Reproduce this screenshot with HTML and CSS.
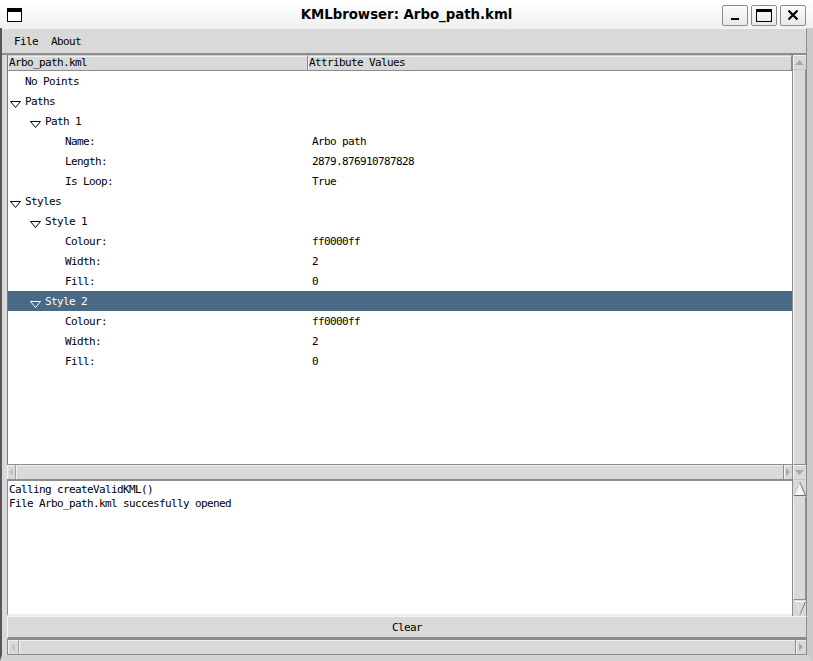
FILE: index.html
```html
<!DOCTYPE html>
<html>
<head>
<meta charset="utf-8">
<link rel="stylesheet" href="styles.css">
</head>
<body>
<div class="window">
  <div class="titlebar">
    <div class="tb-icon">
      <svg width="15" height="14" viewBox="0 0 15 14"><rect x="0.5" y="0.5" width="14" height="13" fill="#fff" stroke="#000"/><rect x="0" y="0" width="15" height="4" fill="#000"/></svg>
    </div>
    <div class="title">KMLbrowser: Arbo_path.kml</div>
    <div class="tb-buttons">
      <div class="tb-btn"><svg width="12" height="12" viewBox="0 0 12 12"><rect x="2" y="9" width="8" height="2" fill="#000"/></svg></div>
      <div class="tb-btn"><svg width="16" height="13" viewBox="0 0 16 13"><rect x="0.5" y="0.5" width="15" height="12" fill="none" stroke="#000"/><rect x="0" y="0" width="16" height="3" fill="#000"/></svg></div>
      <div class="tb-btn"><svg width="12" height="12" viewBox="0 0 12 12"><path d="M1.5 1.5 L10.5 10.5 M10.5 1.5 L1.5 10.5" stroke="#000" stroke-width="2.2"/></svg></div>
    </div>
  </div>
  <div class="frame">
    <div class="menubar"><span>File</span><span>About</span></div>
    <div class="tree-pane">
      <div class="tree-main">
        <div class="tree">
          <div class="tree-head">
            <div class="hcell c1">Arbo_path.kml</div>
            <div class="hcell c2">Attribute Values</div>
          </div>
          <div class="tree-body">
            <div class="row"><div class="name leaf0">No Points</div><div class="val"></div></div>
            <div class="row"><div class="name lvl0"><svg class="tri" width="11" height="7" viewBox="0 0 11 7"><polygon points="0.5,0.5 10.5,0.5 5.5,6.5"/></svg>Paths</div><div class="val"></div></div>
            <div class="row"><div class="name lvl1"><svg class="tri" width="11" height="7" viewBox="0 0 11 7"><polygon points="0.5,0.5 10.5,0.5 5.5,6.5"/></svg>Path 1</div><div class="val"></div></div>
            <div class="row"><div class="name leaf2">Name:</div><div class="val">Arbo path</div></div>
            <div class="row"><div class="name leaf2">Length:</div><div class="val">2879.876910787828</div></div>
            <div class="row"><div class="name leaf2">Is Loop:</div><div class="val">True</div></div>
            <div class="row"><div class="name lvl0"><svg class="tri" width="11" height="7" viewBox="0 0 11 7"><polygon points="0.5,0.5 10.5,0.5 5.5,6.5"/></svg>Styles</div><div class="val"></div></div>
            <div class="row"><div class="name lvl1"><svg class="tri" width="11" height="7" viewBox="0 0 11 7"><polygon points="0.5,0.5 10.5,0.5 5.5,6.5"/></svg>Style 1</div><div class="val"></div></div>
            <div class="row"><div class="name leaf2">Colour:</div><div class="val">ff0000ff</div></div>
            <div class="row"><div class="name leaf2">Width:</div><div class="val">2</div></div>
            <div class="row"><div class="name leaf2">Fill:</div><div class="val">0</div></div>
            <div class="row selected"><div class="name lvl1"><svg class="tri" width="11" height="7" viewBox="0 0 11 7"><polygon points="0.5,0.5 10.5,0.5 5.5,6.5"/></svg>Style 2</div><div class="val"></div></div>
            <div class="row"><div class="name leaf2">Colour:</div><div class="val">ff0000ff</div></div>
            <div class="row"><div class="name leaf2">Width:</div><div class="val">2</div></div>
            <div class="row"><div class="name leaf2">Fill:</div><div class="val">0</div></div>
          </div>
        </div>
        <div class="hscroll ttk">
          <div class="arrow"><svg width="5" height="8" viewBox="0 0 5 8"><polygon points="4,0 0,4 4,8" fill="#c4c4c4"/></svg></div>
          <div class="thumb"></div>
          <div class="arrow"><svg width="5" height="8" viewBox="0 0 5 8"><polygon points="0,0 4,4 0,8" fill="#a8a8a8"/></svg></div>
        </div>
      </div>
      <div class="vscroll ttk">
        <div class="arrow"><svg width="9" height="5" viewBox="0 0 9 5"><polygon points="0,5 4.5,0 9,5" fill="#a8a8a8"/></svg></div>
        <div class="thumb"></div>
        <div class="arrow"><svg width="9" height="5" viewBox="0 0 9 5"><polygon points="0,0 4.5,5 9,0" fill="#a8a8a8"/></svg></div>
      </div>
    </div>
    <div class="log-pane">
      <div class="log">Calling createValidKML()<br>File Arbo_path.kml succesfully opened</div>
      <div class="vscroll tk">
        <div class="tkarrow"><svg width="12" height="14" viewBox="0 0 12 14"><polygon points="6,0.5 11.5,13.5 0.5,13.5" fill="#f4f4f4" stroke="#6e6e6e"/><path d="M6 1.2 L1 13" stroke="#ffffff"/></svg></div>
        <div class="thumb"></div>
        <div class="tkarrow"><svg width="12" height="14" viewBox="0 0 12 14"><polygon points="0.5,0.5 11.5,0.5 6,13.5" fill="#d9d9d9" stroke="#7a7a7a"/><path d="M0.5 0.5 L11.5 0.5 M0.8 0.8 L6 13" stroke="#ffffff"/></svg></div>
      </div>
    </div>
    <div class="clear-btn">Clear</div>
    <div class="hscroll bottom">
      <div class="arrow"><svg width="5" height="8" viewBox="0 0 5 8"><polygon points="4,0 0,4 4,8" fill="#c4c4c4"/></svg></div>
      <div class="thumb"></div>
      <div class="arrow"><svg width="5" height="8" viewBox="0 0 5 8"><polygon points="0,0 4,4 0,8" fill="#a8a8a8"/></svg></div>
    </div>
  </div>
</div>
</body>
</html>
```
FILE: styles.css
```css
html, body {
  margin: 0;
  padding: 0;
}
body {
  width: 813px;
  height: 661px;
  overflow: hidden;
  background: #d9d9d9;
  color: #000;
  font-family: "DejaVu Sans Mono", monospace;
  font-size: 11px;
  letter-spacing: -0.62px;
}
.window {
  display: flex;
  flex-direction: column;
  height: 661px;
}
.titlebar {
  height: 28px;
  flex: none;
  display: grid;
  grid-template-columns: 1fr auto 1fr;
  align-items: center;
  background: linear-gradient(#ffffff, #f0f0f0);
  font-family: "DejaVu Sans", sans-serif;
  letter-spacing: 0;
}
.tb-icon {
  display: flex;
  padding-left: 7px;
  padding-top: 1px;
}
.title {
  font-weight: bold;
  font-size: 13.3px;
  padding-top: 1px;
}
.tb-buttons {
  justify-self: end;
  display: flex;
  gap: 3px;
  padding-right: 7px;
  padding-top: 2px;
}
.tb-btn {
  width: 26px;
  height: 21px;
  box-sizing: border-box;
  border: 1px solid #8c8c8c;
  border-radius: 2px;
  background: linear-gradient(#fbfbfb, #e9e9e9);
  display: flex;
  align-items: center;
  justify-content: center;
}
.frame {
  flex: 1;
  display: flex;
  flex-direction: column;
  border-left: 2px solid #575757;
  border-right: 6px solid #cbcbcb;
  border-bottom: 6px solid #d4d4d4;
  min-height: 0;
}
.menubar {
  height: 27px;
  flex: none;
  box-sizing: border-box;
  border-top: 1px solid #f4f4f4;
  border-bottom: 2px solid #8c8c8c;
  border-right: 1px solid #8c8c8c;
  display: flex;
  align-items: center;
  padding-left: 12px;
  gap: 13px;
}
.tree-pane {
  height: 425px;
  flex: none;
  display: flex;
  padding-left: 5px;
}
.tree-main {
  flex: 1;
  display: flex;
  flex-direction: column;
  min-width: 0;
}
.tree {
  flex: 1;
  display: flex;
  flex-direction: column;
  background: #fff;
  border-left: 1px solid #7a7a7a;
}
.tree-head {
  height: 16px;
  flex: none;
  display: flex;
  background: #d9d9d9;
}
.hcell {
  box-sizing: border-box;
  height: 16px;
  line-height: 14px;
  padding-left: 1px;
  border-top: 1px solid #cfcfcf;
  border-bottom: 1px solid #8c8c8c;
  border-right: 1px solid #8c8c8c;
  box-shadow: inset 1px 1px 0 #efefef;
}
.c1 { width: 300px; }
.c2 { flex: 1; }
.tree-body {
  flex: 1;
}
.row {
  height: 20px;
  display: flex;
  align-items: center;
}
.row .name {
  width: 300px;
  box-sizing: border-box;
  display: flex;
  align-items: center;
}
.row .val {
  padding-left: 4px;
}
.tri {
  margin-top: 6px;
  margin-right: 4px;
  fill: none;
  stroke: currentColor;
}
.lvl0 { padding-left: 2px; }
.lvl1 { padding-left: 22px; }
.leaf0 { padding-left: 17px; }
.leaf2 { padding-left: 57px; }
.selected {
  background: #4a6984;
  color: #fff;
}
.hscroll {
  height: 16px;
  flex: none;
  box-sizing: border-box;
  display: flex;
  align-items: stretch;
  border-top: 1px solid #8c8c8c;
  border-bottom: 1px solid #8c8c8c;
  background: #d9d9d9;
}
.hscroll .arrow {
  width: 8px;
  display: flex;
  align-items: center;
  justify-content: center;
  box-shadow: inset 1px 1px 0 #f2f2f2;
}
.hscroll .thumb {
  flex: 1;
  border-left: 1px solid #a0a0a0;
  border-right: 1px solid #8c8c8c;
  box-shadow: inset 1px 1px 0 #f2f2f2;
}
.hscroll.bottom {
  margin-left: 5px;
  border-right: 1px solid #8c8c8c;
  border-left: 1px solid #8c8c8c;
}
.hscroll.bottom .arrow { width: 10px; }
.vscroll {
  width: 15px;
  flex: none;
  box-sizing: border-box;
  display: flex;
  flex-direction: column;
  background: #d9d9d9;
  border-left: 1px solid #8c8c8c;
  border-right: 1px solid #8c8c8c;
}
.vscroll.ttk .arrow {
  height: 14px;
  flex: none;
  display: flex;
  align-items: center;
  justify-content: center;
  border-bottom: 1px solid #c4c4c4;
  box-shadow: inset 1px 1px 0 #f2f2f2;
}
.vscroll .thumb {
  flex: 1;
  border-left: 1px solid #f4f4f4;
  border-right: 1px solid #8c8c8c;
  border-bottom: 1px solid #8c8c8c;
}
.log-pane {
  height: 136px;
  flex: none;
  display: flex;
  padding-left: 5px;
}
.log {
  flex: 1;
  background: #fff;
  border-left: 1px solid #8c8c8c;
  border-top: 1px solid #8c8c8c;
  border-bottom: 2px solid #ececec;
  padding: 2px 1px 0 1px;
  line-height: 14px;
  white-space: pre;
}
.vscroll.tk .tkarrow {
  height: 16px;
  flex: none;
  display: flex;
  align-items: center;
  justify-content: center;
}
.vscroll.tk {
  padding-top: 1px;
}
.clear-btn {
  height: 23px;
  flex: none;
  box-sizing: border-box;
  margin-left: 5px;
  border-top: 1px solid #f4f4f4;
  border-left: 1px solid #f4f4f4;
  border-bottom: 2px solid #8c8c8c;
  border-right: 1px solid #8c8c8c;
  display: flex;
  align-items: center;
  justify-content: center;
}
```
